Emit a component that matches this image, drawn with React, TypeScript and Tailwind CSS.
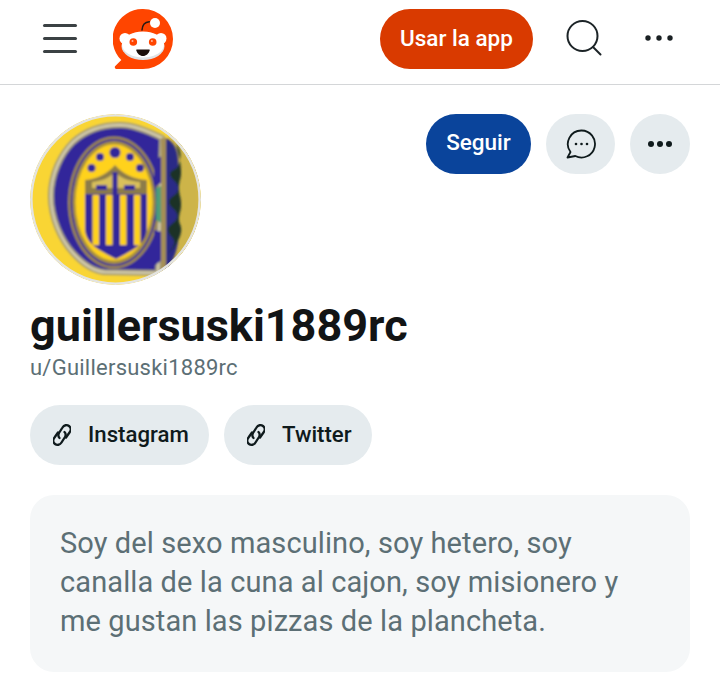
import React from "react";

function Logo() {
  return (
    <svg width="60" height="60" viewBox="0 0 60 60">
      <path d="M30 0a30 30 0 0 1 0 60H3.500c-1.600 0-2.300-1.800-1.200-2.900l6-6A30 30 0 0 1 30 0z" fill="#ff4500" />
      <path d="M29 21c.3-4.500 2.800-8 7.300-8.300" fill="none" stroke="#2a1a14" strokeWidth="1.500" strokeLinecap="round" />
      <circle cx="42" cy="14" r="5" fill="#fff" />
      <circle cx="12" cy="29.500" r="5.500" fill="#fff" />
      <circle cx="48" cy="29.500" r="5.500" fill="#fff" />
      <ellipse cx="30" cy="37" rx="21.500" ry="14" fill="#dfe3e6" />
      <ellipse cx="30" cy="35.500" rx="21" ry="13" fill="#fff" />
      <circle cx="20.300" cy="33" r="3.800" fill="#ff4500" />
      <circle cx="39.700" cy="33" r="3.800" fill="#ff4500" />
      <circle cx="19.500" cy="32" r="1" fill="#ffb79d" />
      <circle cx="38.900" cy="32" r="1" fill="#ffb79d" />
      <path d="M24 40.500h12c.6 0 .9.500.7 1-1 3-3.500 5.500-6.700 5.500s-5.700-2.500-6.700-5.500c-.2-.5.1-1 .7-1z" fill="#1c0f0a" />
    </svg>
  );
}

function Crest() {
  const blue = "#30289a";
  const gold = "#ffd21e";
  const stars: [number, number, number][] = [[61.500, 54, 4], [70, 43, 4], [85, 38.500, 5.500], [100, 43, 4], [110, 54, 4]];
  const c = "M132 24C112 14 100 11 90 11 70 11 54 18 43 28 31 40 21 60 21 82c0 22 10 44 22 57 10 11 21 18 31 19l54 1z";
  return (
    <svg width="171" height="171" viewBox="0 0 171 171" className="rounded-full">
      <defs>
        <clipPath id="circ"><circle cx="85.500" cy="85.500" r="85.500" /></clipPath>
        <filter id="soft"><feGaussianBlur stdDeviation="0.900" /></filter>
        <filter id="soft2"><feGaussianBlur stdDeviation="2.500" /></filter>
      </defs>
      <g clipPath="url(#circ)">
        <rect width="171" height="171" fill="#f9d534" />
        <rect x="140" width="31" height="171" fill="#cdb44a" filter="url(#soft2)" />
        <g filter="url(#soft)">
          <path d={c} fill={blue} stroke="#a39b7d" strokeWidth="6" />
          <path d={c} fill="none" stroke="#dcd4b2" strokeWidth="2" />
          <ellipse cx="84" cy="88.500" rx="46" ry="66" fill="#a08a45" />
          <ellipse cx="84" cy="88.500" rx="43.500" ry="63.500" fill={blue} />
          <ellipse cx="84" cy="88.500" rx="41.500" ry="61.500" fill="#a8913c" />
          <ellipse cx="84" cy="88.500" rx="38.500" ry="58" fill={gold} />
          {stars.map(([x, y, r]) => (
            <circle key={x} cx={x} cy={y} r={r} fill={blue} />
          ))}
          <path d="M55 66c12-1 22-6 30-15 8 9 18 14 32 15v16H55z" fill="#8c7c48" />
          <path d="M62 68c10-1 17-4 23-10 6 6 13 9 25 10v6H62z" fill="#d9c05a" />
          <rect x="82.500" y="58" width="5" height="22" fill={blue} />
          <rect x="66" y="71" width="11" height="5" fill={blue} />
          <rect x="94" y="71" width="11" height="5" fill={blue} />
          <path d="M55 80h62v34c0 16-14 22-31 31-17-9-31-15-31-31z" fill={blue} />
          {[62.500, 76, 90, 104].map((x) => (
            <rect key={x} x={x} y="81" width="6.500" height="50" fill={gold} />
          ))}
          <path d="M126 74l10-4v42l-10-6z" fill="#4e9c78" />
          <path d="M124 46l8-4v26l-8 6z" fill={blue} />
          <path d="M124 116l8 2v28l-8 6z" fill={blue} />
          <rect x="131" y="24" width="5" height="138" fill="#a58f55" />
          <path d="M136 24c8 4 12 12 12 24v80c-2 12-6 22-12 30z" fill="#2a2c86" />
          <path d="M146 30c5 6 6 12 2 22-2 4-8 4-8 8 0 6 10 8 8 16-1 6-9 6-9 12 0 6 10 8 8 16-2 6-9 6-9 12 0 6 8 8 6 14-2 6-5 8-7 10 6-4 12-12 14-22 1-6-2-8-2-12 0-8 2-8 2-16 0-8-2-8-2-16 0-8 2-8 2-16 0-10-3-20-5-28z" fill="#1e3226" />
        </g>
        <circle cx="85.500" cy="85.500" r="84.200" fill="none" stroke="#e4e4e0" strokeWidth="2.600" />
      </g>
    </svg>
  );
}

function LinkIcon() {
  const d = "M6.500 15C5 13.500 5 12 6 10l3.500-5.500C11 2 14 1.500 16 3c2 1.500 2 4.500.5 6.500L13 14.500";
  return (
    <svg width="18" height="24" viewBox="0 0 18 24" fill="none" stroke="#0f1a1c" strokeWidth="2.300" strokeLinecap="round" className="shrink-0">
      <path d={d} />
      <path d={d} transform="rotate(180 9 12)" />
    </svg>
  );
}

function Pill({ label, w }: { label: string; w: string }) {
  return (
    <div className={`flex h-[60px] items-center gap-[17px] rounded-full bg-[#e5ebee] pl-[23px] text-[22.200px] font-medium text-[#0f1a1c] ${w}`}>
      <LinkIcon />
      <span>{label}</span>
    </div>
  );
}

export default function App() {
  return (
    <div className="h-[696px] w-[720px] overflow-hidden bg-white font-['Roboto',sans-serif]">
      <header className="flex h-[85px] items-start border-b border-[#d4d6d8] pt-[9px]">
        <div className="ml-[43px] mt-[15px] flex w-[34px] flex-col gap-[10.500px]">
          <div className="h-[2.500px] rounded-full bg-[#3b4144]" />
          <div className="h-[2.500px] rounded-full bg-[#3b4144]" />
          <div className="h-[2.500px] rounded-full bg-[#3b4144]" />
        </div>
        <div className="ml-[36px]"><Logo /></div>
        <div className="ml-[207px] flex h-[60px] w-[153px] items-center justify-center rounded-full bg-[#d93a00] pb-[1px] text-[22.500px] font-medium text-white">
          Usar la app
        </div>
        <svg width="38" height="38" viewBox="0 0 38 38" fill="none" stroke="#1c2427" strokeWidth="2" strokeLinecap="round" className="ml-[32px] mt-[10px]">
          <circle cx="17.500" cy="17" r="15" />
          <path d="M28 28l7.500 7.500" />
        </svg>
        <svg width="30" height="8" viewBox="0 0 30 8" fill="#1a2023" className="ml-[41px] mt-[25px]">
          <circle cx="4" cy="4" r="2.700" /><circle cx="15" cy="4" r="2.700" /><circle cx="26" cy="4" r="2.700" />
        </svg>
      </header>

      <main className="px-[30px] pt-[29px]">
        <div className="flex items-start justify-between">
          <Crest />
          <div className="flex gap-[15px]">
            <div className="flex h-[60px] w-[105px] items-center justify-center rounded-full bg-[#0a449b] pb-[2px] text-[22.500px] font-medium text-white">
              Seguir
            </div>
            <div className="flex h-[60px] w-[69px] items-center justify-center rounded-full bg-[#e5ebee]">
              <svg width="32" height="32" viewBox="0 0 32 32" fill="none" stroke="#0f1a1c" strokeWidth="1.800" strokeLinejoin="round">
                <path d="M16.500 2.500a13.500 13.500 0 1 1-6.200 25.500L2.500 29.500l3-5.500A13.500 13.500 0 0 1 16.500 2.500z" />
                <g fill="#0f1a1c" stroke="none">
                  <circle cx="11" cy="16" r="1.300" /><circle cx="16.500" cy="16" r="1.300" /><circle cx="22" cy="16" r="1.300" />
                </g>
              </svg>
            </div>
            <div className="flex h-[60px] w-[60px] items-center justify-center rounded-full bg-[#e5ebee]">
              <svg width="26" height="8" viewBox="0 0 26 8" fill="#0f1a1c">
                <circle cx="4" cy="4" r="3" /><circle cx="13" cy="4" r="3" /><circle cx="22" cy="4" r="3" />
              </svg>
            </div>
          </div>
        </div>

        <h1 className="mt-[15px] text-[45px] leading-[52px] font-bold text-[#121415]">guillersuski1889rc</h1>
        <p className="mt-[1px] text-[22px] leading-[30px] tracking-[0.24px] text-[#5c6f75]">u/Guillersuski1889rc</p>

        <div className="mt-[22px] flex gap-[15px]">
          <Pill label="Instagram" w="w-[179px]" />
          <Pill label="Twitter" w="w-[148px]" />
        </div>

        <div className="mt-[30px] h-[177px] w-[660px] rounded-[24px] bg-[#f5f7f8] px-[30px] pt-[29px] text-[29px] leading-[39px] tracking-[0.1px] text-[#5c6f75]">
          <p>Soy del sexo masculino, soy hetero, soy</p>
          <p>canalla de la cuna al cajon, soy misionero y</p>
          <p>me gustan las pizzas de la plancheta.</p>
        </div>
      </main>
    </div>
  );
}
